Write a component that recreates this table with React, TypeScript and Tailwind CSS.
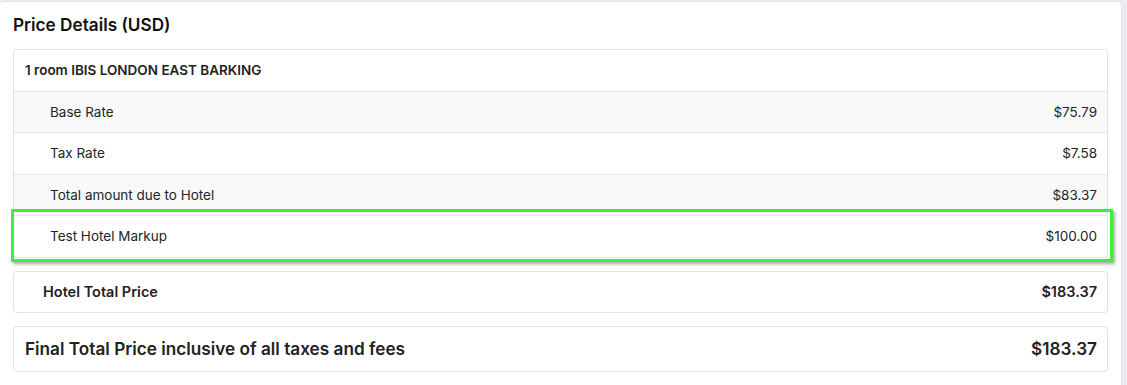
const rows = [
  { label: 'Base Rate', amount: '$75.79', shade: true, h: 'h-[41px]' },
  { label: 'Tax Rate', amount: '$7.58', shade: false, h: 'h-[42px]' },
  { label: 'Total amount due to Hotel', amount: '$83.37', shade: true, h: 'h-[41px]' },
];

export default function App() {
  return (
    <div className="h-[385px] overflow-hidden bg-[#eaecef] pt-px pr-[5px] font-['Inter',sans-serif] text-[#212529]">
      <div className="-ml-px h-[400px] rounded-[4px] border border-[#e1e4e8] bg-white px-[13px] pt-[11px]">
        <h2 className="text-[17.2px] leading-6 font-semibold text-[#111]">Price Details (USD)</h2>

        <div className="mt-[12px] rounded-[4px] border border-[#dfe1e4]">
          <div className="flex h-[42px] items-center border-b border-[#e3e5e8] px-[11px] text-[13.5px] font-semibold text-[#222]">
            1 room IBIS LONDON EAST BARKING
          </div>
          {rows.map((r) => (
            <div
              key={r.label}
              className={`flex ${r.h} items-center justify-between border-b border-[#e6e7e9] pr-[10px] pl-[36px] text-[13.5px] ${r.shade ? 'bg-[#f9f9f9]' : 'bg-white'}`}
            >
              <span>{r.label}</span>
              <span>{r.amount}</span>
            </div>
          ))}
          <div className="relative">
            <div className="flex h-[41px] items-center justify-between pr-[10px] pl-[36px] text-[13.5px]">
              <span>Test Hotel Markup</span>
              <span>$100.00</span>
            </div>
            <div className="pointer-events-none absolute -top-[7px] -right-[6px] -bottom-[5px] -left-[3px] border-[3px] border-[#3cf03a] shadow-[2px_2px_3px_rgba(0,0,0,0.35)]" />
          </div>
        </div>

        <div className="mt-[13px] flex h-[42px] items-center justify-between rounded-[4px] border border-[#dfe1e4] pr-[10px] pl-[29px] text-[14.5px] font-semibold text-[#222]">
          <span>Hotel Total Price</span>
          <span>$183.37</span>
        </div>

        <div className="mt-[13px] flex h-[46px] items-center justify-between rounded-[4px] border border-[#dfe1e4] pr-[10px] pl-[11px] text-[17.2px] font-semibold text-[#222]">
          <span>Final Total Price inclusive of all taxes and fees</span>
          <span>$183.37</span>
        </div>
      </div>
    </div>
  );
}
